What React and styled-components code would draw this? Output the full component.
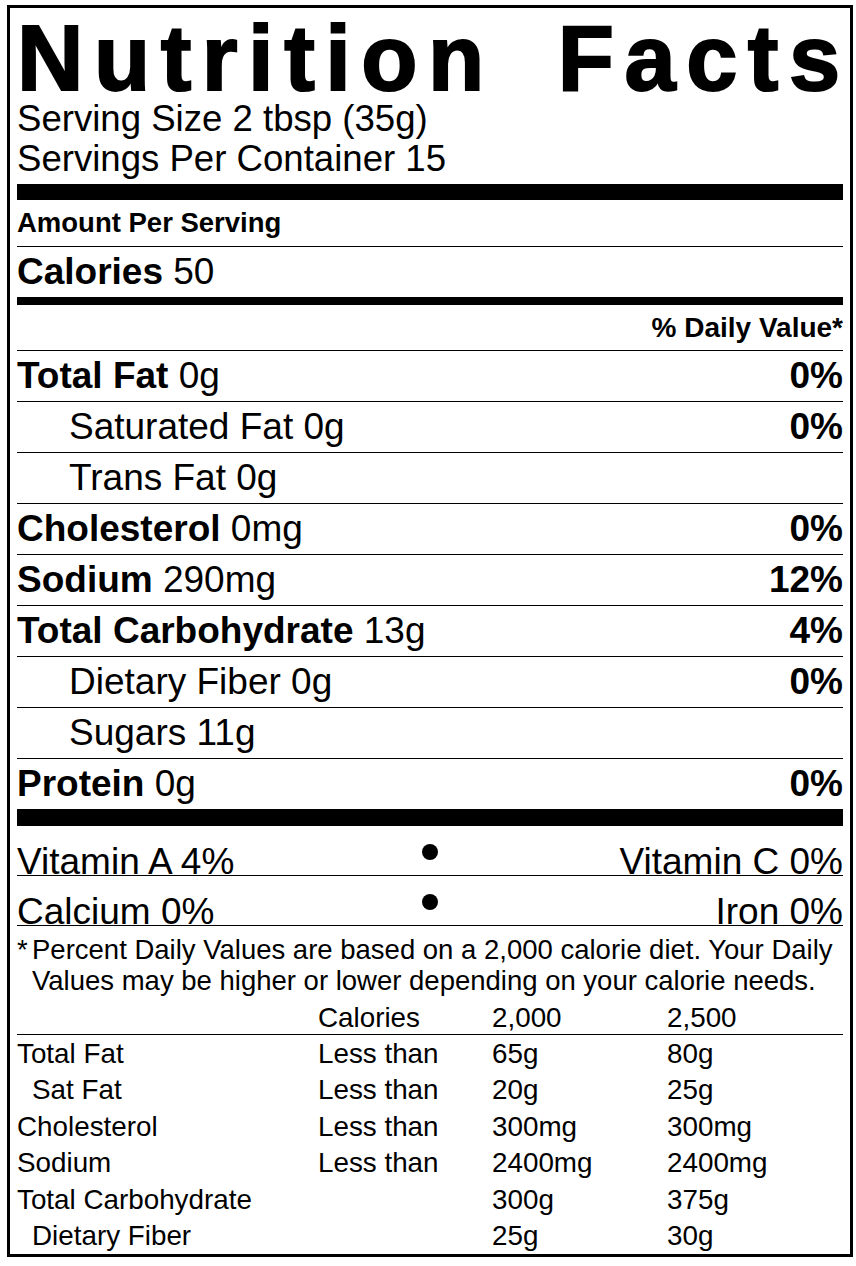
import React from "react";
import styled, { createGlobalStyle } from "styled-components";

const GlobalStyle = createGlobalStyle`
  html, body {
    margin: 0;
    padding: 0;
    background: #fff;
  }
  body {
    font-family: "Liberation Sans", Arial, sans-serif;
    color: #000;
  }
`;

const Page = styled.div`
  padding: 5px 0 0 7px;
`;

const Label = styled.section`
  width: 846px;
  box-sizing: border-box;
  border: 3px solid #000;
  padding: 0 7px;
`;

const Title = styled.h1`
  margin: 0;
  padding-top: 12px;
  font-size: 92px;
  line-height: 76px;
  font-weight: 700;
  letter-spacing: 10.5px;
  word-spacing: 27px;
  white-space: nowrap;
  -webkit-text-stroke: 2px #000;
`;

const Serving = styled.div`
  margin-top: 3px;
  padding-bottom: 5px;
  font-size: 36.6px;
  line-height: 40px;
`;

const Bar = styled.div`
  height: ${(p) => p.$h}px;
  background: #000;
`;

const AmountRow = styled.div`
  font-size: 27.5px;
  font-weight: 700;
  line-height: 46px;
  border-bottom: 1px solid #000;
`;

const CaloriesRow = styled.div`
  font-size: 37px;
  line-height: 50px;
`;

const DVHeader = styled.div`
  font-size: 28px;
  font-weight: 700;
  line-height: 45px;
  text-align: right;
  border-bottom: 1px solid #000;
`;

const NutrientList = styled.div``;

const NutrientRow = styled.div`
  display: flex;
  justify-content: space-between;
  font-size: 37px;
  line-height: 50px;
  padding-left: ${(p) => (p.$sub ? 52 : 0)}px;
  border-bottom: 1px solid #000;
  &:last-child {
    border-bottom: none;
  }
`;

const Strong = styled.b`
  font-weight: 700;
`;

const VitaminRow = styled.div`
  display: grid;
  grid-template-columns: 1fr 16px 1fr;
  align-items: end;
  height: 50px;
  box-sizing: border-box;
  font-size: 37px;
  line-height: 26px;
  border-bottom: 1px solid #000;
`;

const VitaminRight = styled.span`
  text-align: right;
`;

const Dot = styled.span`
  align-self: start;
  margin-top: 18px;
  width: 16px;
  height: 16px;
  border-radius: 50%;
  background: #000;
`;

const Footnote = styled.p`
  margin: 0 0 5px;
  padding: 8px 0 0 15px;
  text-indent: -15px;
  font-size: 27.5px;
  line-height: 31px;
`;

const Star = styled.span`
  display: inline-block;
  width: 15px;
  text-indent: 0;
`;

const Table = styled.div`
  font-size: 27.8px;
`;

const TableRow = styled.div`
  display: grid;
  grid-template-columns: 301px 174px 175px 1fr;
  line-height: ${(p) => (p.$head ? 33 : 36.4)}px;
  border-bottom: ${(p) => (p.$head ? "1px solid #000" : "none")};
  margin-bottom: ${(p) => (p.$head ? 1 : 0)}px;
`;

const Cell = styled.span`
  padding-left: ${(p) => (p.$sub ? 15 : 0)}px;
`;

const nutrients = [
  { name: "Total Fat", amount: "0g", dv: "0%" },
  { name: "Saturated Fat", amount: "0g", dv: "0%", sub: true },
  { name: "Trans Fat", amount: "0g", sub: true },
  { name: "Cholesterol", amount: "0mg", dv: "0%" },
  { name: "Sodium", amount: "290mg", dv: "12%" },
  { name: "Total Carbohydrate", amount: "13g", dv: "4%" },
  { name: "Dietary Fiber", amount: "0g", dv: "0%", sub: true },
  { name: "Sugars", amount: "11g", sub: true },
  { name: "Protein", amount: "0g", dv: "0%" },
];

const limits = [
  ["Total Fat", "Less than", "65g", "80g"],
  ["Sat Fat", "Less than", "20g", "25g", true],
  ["Cholesterol", "Less than", "300mg", "300mg"],
  ["Sodium", "Less than", "2400mg", "2400mg"],
  ["Total Carbohydrate", "", "300g", "375g"],
  ["Dietary Fiber", "", "25g", "30g", true],
];

export default function App() {
  return (
    <Page>
      <GlobalStyle />
      <Label>
        <Title>Nutrition Facts</Title>
        <Serving>
          <div>Serving Size 2 tbsp (35g)</div>
          <div>Servings Per Container 15</div>
        </Serving>
        <Bar $h={16} />
        <AmountRow>Amount Per Serving</AmountRow>
        <CaloriesRow>
          <Strong>Calories</Strong> 50
        </CaloriesRow>
        <Bar $h={8} />
        <DVHeader>% Daily Value*</DVHeader>
        <NutrientList>
          {nutrients.map((n) => (
            <NutrientRow key={n.name} $sub={n.sub}>
              <span>
                {n.sub ? n.name : <Strong>{n.name}</Strong>} {n.amount}
              </span>
              {n.dv && <Strong>{n.dv}</Strong>}
            </NutrientRow>
          ))}
        </NutrientList>
        <Bar $h={17} />
        <VitaminRow>
          <span>Vitamin A 4%</span>
          <Dot />
          <VitaminRight>Vitamin C 0%</VitaminRight>
        </VitaminRow>
        <VitaminRow>
          <span>Calcium 0%</span>
          <Dot />
          <VitaminRight>Iron 0%</VitaminRight>
        </VitaminRow>
        <Footnote>
          <Star>*</Star>Percent Daily Values are based on a 2,000 calorie diet. Your Daily
          <br />
          Values may be higher or lower depending on your calorie needs.
        </Footnote>
        <Table>
          <TableRow $head>
            <span />
            <span>Calories</span>
            <span>2,000</span>
            <span>2,500</span>
          </TableRow>
          {limits.map(([name, cmp, a, b, sub]) => (
            <TableRow key={name}>
              <Cell $sub={sub}>{name}</Cell>
              <span>{cmp}</span>
              <span>{a}</span>
              <span>{b}</span>
            </TableRow>
          ))}
        </Table>
      </Label>
    </Page>
  );
}
